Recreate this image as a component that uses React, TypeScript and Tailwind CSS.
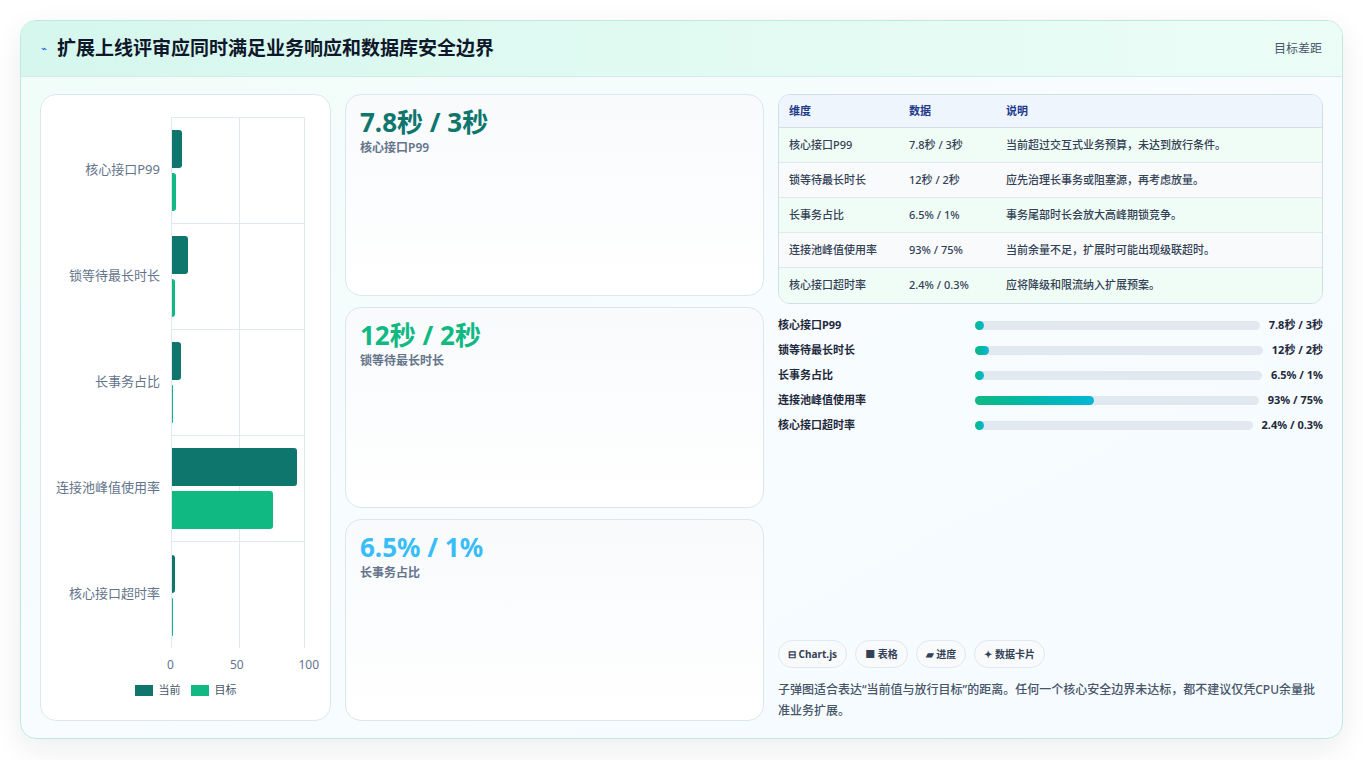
import React from "react";

const font = { fontFamily: '"Noto Sans", "Noto Sans CJK SC", sans-serif' };

const rows = [
  { name: "核心接口P99", cur: 7.8, tgt: 3, data: "7.8秒 / 3秒", note: "当前超过交互式业务预算，未达到放行条件。", fill: 3 },
  { name: "锁等待最长时长", cur: 12, tgt: 2, data: "12秒 / 2秒", note: "应先治理长事务或阻塞源，再考虑放量。", fill: 5 },
  { name: "长事务占比", cur: 6.5, tgt: 1, data: "6.5% / 1%", note: "事务尾部时长会放大高峰期锁竞争。", fill: 3 },
  { name: "连接池峰值使用率", cur: 93, tgt: 75, data: "93% / 75%", note: "当前余量不足，扩展时可能出现级联超时。", fill: 42 },
  { name: "核心接口超时率", cur: 2.4, tgt: 0.3, data: "2.4% / 0.3%", note: "应将降级和限流纳入扩展预案。", fill: 3 },
];

function Chart() {
  const W = 134;
  return (
    <div className="w-[291px] shrink-0 rounded-2xl border border-[#dbe7ee] bg-white flex flex-col pt-[22px] pb-[14px]">
      <div className="flex">
        <div className="w-[130px] flex flex-col">
          {rows.map((r) => (
            <div key={r.name} className="h-[106px] flex items-center justify-end pr-[11px] text-[13px] text-[#64748b]">{r.name}</div>
          ))}
        </div>
        <div className="relative w-[134px] border-l border-t border-r border-[#e2e8f0]">
          <div className="absolute top-0 bottom-0 left-[67px] w-px bg-[#e2e8f0]" />
          {rows.map((r, i) => (
            <div key={r.name} className={`relative h-[106px] flex flex-col justify-center gap-[5px] ${i < 4 ? "border-b border-[#e2e8f0]" : ""}`}>
              <div className="h-[38px] bg-[#0f766e] rounded-r-[3px]" style={{ width: Math.max(2, (r.cur / 100) * W) }} />
              <div className="h-[38px] bg-[#10b981] rounded-r-[3px]" style={{ width: Math.max(1, (r.tgt / 100) * W) }} />
            </div>
          ))}
        </div>
      </div>
      <div className="flex ml-[130px] w-[134px] justify-between text-[12px] text-[#64748b] mt-[8px] relative h-[16px]">
        <span className="absolute left-[-4px]">0</span>
        <span className="absolute left-[59px]">50</span>
        <span className="absolute right-[-14px]">100</span>
      </div>
      <div className="flex justify-center gap-[10px] mt-[10px] text-[11px] text-[#475569]">
        <span className="flex items-center gap-[6px]"><span className="w-[18px] h-[11px] bg-[#0f766e]" />当前</span>
        <span className="flex items-center gap-[6px]"><span className="w-[18px] h-[11px] bg-[#10b981]" />目标</span>
      </div>
    </div>
  );
}

function Card({ v, l, c }: { v: string; l: string; c: string }) {
  return (
    <div className="flex-1 rounded-2xl border border-[#dbe7ee] bg-gradient-to-b from-[#f8fafc] to-white px-[14px] py-[10px]">
      <div className={`text-[26px] font-bold leading-[34px] ${c}`}>{v}</div>
      <div className="text-[12px] font-semibold text-[#64748b]">{l}</div>
    </div>
  );
}

export default function App() {
  return (
    <div style={font} className="w-[1363px] h-[760px] bg-white pt-[20px] px-[20px]">
      <div className="h-[719px] rounded-2xl border border-[#bfe9df] bg-gradient-to-br from-[#f0fdf7] via-[#f8fcff] to-[#f5fbff] shadow-[0_10px_30px_rgba(15,23,42,0.08)] flex flex-col overflow-hidden">
        <div className="h-[56px] shrink-0 bg-gradient-to-r from-[#d5f7ed] to-[#ecfdf7] border-b border-[#d5ece6] flex items-center justify-between px-[20px]">
          <div className="flex items-center gap-[10px]">
            <span className="text-[10px] text-[#2563eb]">⌁</span>
            <span className="text-[19px] font-bold text-[#0f172a]">扩展上线评审应同时满足业务响应和数据库安全边界</span>
          </div>
          <span className="text-[12px] text-[#475569]">目标差距</span>
        </div>
        <div className="flex gap-[14px] px-[19px] pt-[17px] pb-[17px] flex-1">
          <Chart />
          <div className="w-[419px] shrink-0 flex flex-col gap-[11px]">
            <Card v="7.8秒 / 3秒" l="核心接口P99" c="text-[#0f766e]" />
            <Card v="12秒 / 2秒" l="锁等待最长时长" c="text-[#10b981]" />
            <Card v="6.5% / 1%" l="长事务占比" c="text-[#38bdf8]" />
          </div>
          <div className="flex-1 flex flex-col">
            <div className="rounded-xl border border-[#d3dde8] overflow-hidden bg-white">
              <div className="flex h-[33px] items-center bg-[#eef5fd] border-b border-[#d3dde8] text-[11px] font-semibold text-[#1e3a8a]">
                <span className="w-[130px] pl-[10px]">维度</span><span className="w-[97px]">数据</span><span>说明</span>
              </div>
              {rows.map((r, i) => (
                <div key={r.name} className={`flex h-[35px] items-center text-[11px] text-[#334155] font-medium ${i % 2 ? "bg-[#f8fafc]" : "bg-[#f0fdf6]"} ${i < 4 ? "border-b border-[#e2e8f0]" : ""}`}>
                  <span className="w-[130px] pl-[10px]">{r.name}</span><span className="w-[97px]">{r.data}</span><span>{r.note}</span>
                </div>
              ))}
            </div>
            <div className="flex flex-col gap-[9px] mt-[13px]">
              {rows.map((r) => (
                <div key={r.name} className="flex items-center h-[16px] text-[11px] font-bold text-[#1e293b]">
                  <span className="w-[197px] shrink-0">{r.name}</span>
                  <div className="flex-1 h-[9px] rounded-full bg-[#e2e8f0] mr-[9px]">
                    <div className="h-full rounded-full bg-gradient-to-r from-[#10b981] to-[#06b6d4] min-w-[9px]" style={{ width: `${r.fill}%` }} />
                  </div>
                  <span className="shrink-0">{r.data}</span>
                </div>
              ))}
            </div>
            <div className="flex-1" />
            <div className="flex gap-[8px] text-[10px] font-bold text-[#334155]">
              {["⊟ Chart.js", "■ 表格", "▰ 进度", "✦ 数据卡片"].map((t) => (
                <span key={t} className="px-[9px] h-[28px] flex items-center rounded-full border border-[#e2e8f0] bg-[#f8fafc]">{t}</span>
              ))}
            </div>
            <p className="mt-[11px] text-[12px] leading-[21px] font-medium text-[#475569]">子弹图适合表达“当前值与放行目标”的距离。任何一个核心安全边界未达标，都不建议仅凭CPU余量批准业务扩展。</p>
          </div>
        </div>
      </div>
    </div>
  );
}
